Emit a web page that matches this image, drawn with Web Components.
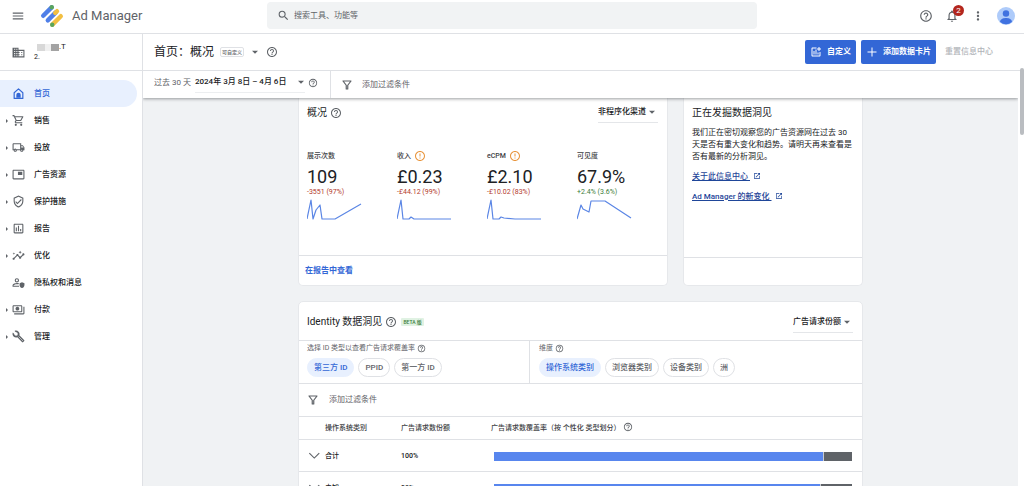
<!DOCTYPE html>
<html lang="zh-CN">
<head>
<meta charset="utf-8">
<title>Ad Manager</title>
<style>
  html, body { margin: 0; height: 100%; }
  body {
    font: 400 8px/12px Roboto, "Noto Sans CJK SC", sans-serif;
    color: #202124;
    background: #fff;
    --line: #dfe1e5;
    --blue: #3367d6;
    --muted: #5f6368;
    overflow: hidden;
  }
</style>
</head>
<body>
<am-app></am-app>
<script>
const ICONS = {
  menu: '<path d="M3 18h18v-2H3v2zm0-5h18v-2H3v2zm0-7v2h18V6H3z"/>',
  search: '<path d="M15.5 14h-.79l-.28-.27A6.47 6.47 0 0 0 16 9.5 6.5 6.5 0 1 0 9.5 16c1.61 0 3.09-.59 4.23-1.57l.27.28v.79l5 4.99L20.49 19l-4.99-5zm-6 0C7.01 14 5 11.99 5 9.5S7.01 5 9.5 5 14 7.01 14 9.5 11.99 14 9.5 14z"/>',
  help: '<path d="M11 18h2v-2h-2v2zm1-16C6.48 2 2 6.48 2 12s4.48 10 10 10 10-4.48 10-10S17.52 2 12 2zm0 18c-4.41 0-8-3.59-8-8s3.59-8 8-8 8 3.59 8 8-3.59 8-8 8zm0-14c-2.21 0-4 1.79-4 4h2c0-1.1.9-2 2-2s2 .9 2 2c0 2-3 1.75-3 5h2c0-2.25 3-2.5 3-5 0-2.21-1.79-4-4-4z"/>',
  bell: '<path d="M12 22c1.1 0 2-.9 2-2h-4c0 1.1.9 2 2 2zm6-6v-5c0-3.07-1.63-5.64-4.5-6.32V4c0-.83-.67-1.5-1.5-1.5s-1.5.67-1.5 1.5v.68C7.64 5.36 6 7.92 6 11v5l-2 2v1h16v-1l-2-2zm-2 1H8v-6c0-2.48 1.51-4.5 4-4.5s4 2.02 4 4.5v6z"/>',
  more: '<path d="M12 8c1.1 0 2-.9 2-2s-.9-2-2-2-2 .9-2 2 .9 2 2 2zm0 2c-1.1 0-2 .9-2 2s.9 2 2 2 2-.9 2-2-.9-2-2-2zm0 6c-1.1 0-2 .9-2 2s.9 2 2 2 2-.9 2-2-.9-2-2-2z"/>',
  business: '<path d="M12 7V3H1v18h22V7H12zM6 19H4v-2h2v2zm0-4H4v-2h2v2zm0-4H4V9h2v2zm0-4H4V5h2v2zm4 12H8v-2h2v2zm0-4H8v-2h2v2zm0-4H8V9h2v2zm0-4H8V5h2v2zm11 12h-9v-2h2v-2h-2v-2h2v-2h-2V9h9v10zm-2-8h-2v2h2v-2zm0 4h-2v2h2v-2z"/>',
  home: '<path d="M4 21V10.5L12 3.5l8 7V21z" fill="none" stroke="currentColor" stroke-width="2.2" stroke-linejoin="round"/><path d="M8 20v-5.500a4 4 0 0 1 8 0V20z"/>',
  cart: '<path d="M15.55 13c.75 0 1.41-.41 1.75-1.03l3.58-6.49A.996.996 0 0 0 20.010 4H5.210l-.94-2H1v2h2l3.600 7.590-1.350 2.440C4.520 15.370 5.480 17 7 17h12v-2H7l1.100-2h7.450zM6.160 6h12.150l-2.760 5H8.530L6.160 6zM7 18c-1.100 0-1.990.9-1.990 2S5.900 22 7 22s2-.9 2-2-.9-2-2-2zm10 0c-1.100 0-1.990.9-1.990 2s.89 2 1.990 2 2-.9 2-2-.9-2-2-2z"/>',
  truck: '<path d="M20 8h-3V4H3c-1.100 0-2 .9-2 2v11h2c0 1.660 1.340 3 3 3s3-1.340 3-3h6c0 1.660 1.340 3 3 3s3-1.340 3-3h2v-5l-3-4zm-.5 1.500 1.960 2.500H17V9.500h2.500zM6 18a1 1 0 1 1 0-2 1 1 0 0 1 0 2zm2.220-3c-.55-.61-1.330-1-2.220-1s-1.670.39-2.220 1H3V6h12v9H8.220zM18 18a1 1 0 1 1 0-2 1 1 0 0 1 0 2z"/>',
  inventory: '<path d="M21 3H3c-1.100 0-2 .9-2 2v14c0 1.100.9 2 2 2h18c1.100 0 2-.9 2-2V5c0-1.100-.9-2-2-2zm0 16H3V5h18v14zM19 7h-8v6h8V7z"/>',
  shield: '<path d="M12 1 3 5v6c0 5.550 3.840 10.740 9 12 5.160-1.260 9-6.450 9-12V5l-9-4zm7 10c0 4.520-2.980 8.690-7 9.930-4.020-1.240-7-5.410-7-9.930V6.300l7-3.110 7 3.110V11zm-11.590.59L6 13l4 4 8-8-1.410-1.420L10 14.170z"/>',
  report: '<path d="M19 3H5c-1.100 0-2 .9-2 2v14c0 1.100.9 2 2 2h14c1.100 0 2-.9 2-2V5c0-1.100-.9-2-2-2zm0 16H5V5h14v14zM7 10h2v7H7zm4-3h2v10h-2zm4 6h2v4h-2z"/>',
  insights: '<path d="M21 8c-1.450 0-2.260 1.440-1.930 2.510l-3.550 3.560c-.3-.09-.74-.09-1.040 0l-2.550-2.550C12.270 10.450 11.460 9 10 9c-1.450 0-2.270 1.440-1.930 2.520l-4.560 4.550C2.440 15.740 1 16.550 1 18c0 1.100.9 2 2 2 1.450 0 2.260-1.440 1.930-2.510l4.550-4.560c.3.090.74.090 1.040 0l2.550 2.550C12.730 16.550 13.540 18 15 18c1.450 0 2.270-1.440 1.930-2.520l3.560-3.550C21.560 12.260 23 11.450 23 10c0-1.100-.9-2-2-2zM15 9l.94-2.070L18 6l-2.060-.93L15 3l-.92 2.070L12 6l2.080.93zM3.500 11 4 9l2-.5L4 8l-.5-2L3 8l-2 .5L3 9z"/>',
  privacy: '<path d="M9 4a4 4 0 1 0 0 8 4 4 0 0 0 0-8zm0 2a2 2 0 1 1 0 4 2 2 0 0 1 0-4zM9 13c-2.700 0-8 1.300-8 4v3h12v-2H3v-1c0-.6 3-2 6-2 1 0 2 .1 3 .4l1-1.800C11.500 13.200 10 13 9 13z"/><path d="m18.500 11.500-4.500 2v3c0 2.800 1.900 5 4.500 5.800 2.600-.8 4.500-3 4.500-5.800v-3z"/>',
  money: '<path d="M19 15V6c0-1.100-.9-2-2-2H3c-1.100 0-2 .9-2 2v9c0 1.100.9 2 2 2h14c1.100 0 2-.9 2-2zm-2 0H3V6h14v9zm-7-8c-1.900 0-3.500 1.600-3.500 3.500S8.100 14 10 14s3.500-1.600 3.500-3.500S11.900 7 10 7zm13 0v12c0 1.100-.9 2-2 2H4v-2h17V7h2z"/>',
  wrench: '<path d="m22.700 19-9.100-9.100c.9-2.300.4-5-1.500-6.900-2-2-5-2.400-7.400-1.300L9 6 6 9 1.600 4.700C.4 7.100.9 10.100 2.900 12.100c1.900 1.900 4.600 2.400 6.900 1.500l9.100 9.100c.4.4 1 .4 1.400 0l2.300-2.300c.5-.4.5-1.100.1-1.400z"/><circle cx="7.500" cy="7.500" r="3.200" fill="#fff"/><path d="M6.500 6.500l3 3M12 12l8.500 8.500" stroke="#fff" stroke-width="1"/>',
  addchart: '<path d="M19 12v7H5V5h8V3H5c-1.100 0-2 .9-2 2v14c0 1.100.9 2 2 2h14c1.100 0 2-.9 2-2v-7zM7 10h2v7H7zm4-3h2v10h-2zm4 6h2v4h-2zM19 5V2h-2v3h-3v2h3v3h2V7h3V5z"/>',
  plus: '<path d="M21 13h-8v8h-2v-8H3v-2h8V3h2v8h8z"/>',
  filter: '<path fill="none" stroke="currentColor" stroke-width="2.400" stroke-linejoin="round" d="M4 4h16l-6.500 8.500V20h-3v-7.500z"/>',
  alert: '<path d="M11 15h2v2h-2v-2zm0-8h2v6h-2V7zm1-5C6.480 2 2 6.480 2 12s4.480 10 10 10 10-4.480 10-10S17.520 2 12 2zm0 18c-4.410 0-8-3.590-8-8s3.590-8 8-8 8 3.590 8 8-3.590 8-8 8z"/>',
  open: '<path d="M19 19H5V5h7V3H5a2 2 0 0 0-2 2v14a2 2 0 0 0 2 2h14c1.100 0 2-.9 2-2v-7h-2v7zM14 3v2h3.590l-9.830 9.830 1.410 1.410L19 6.410V10h2V3h-7z"/>',
  chevron: '<path d="M4 7l8.500 8.500L21 7" fill="none" stroke="currentColor" stroke-width="2"/>',
  caret: '<path d="M3 8l9 9 9-9z"/>',
  avatar: '<circle cx="12" cy="12" r="12" fill="#aecbfa"/><circle cx="12" cy="8.700" r="4.300" fill="#4072e0"/><path d="M4 19.500c1-4 4.500-4.800 8-4.800s7 .8 8 4.800a11 11 0 0 1-16 0z" fill="#4072e0"/>',
  logo: '<g fill="none" stroke-linecap="round" stroke-width="4.400"><path d="M3.200 11.800 11.600 3.400" stroke="#4f7fe8"/><path d="M7.800 16.400 15.800 8.400" stroke="#4f7fe8"/><path d="M15.200 9 17 7.200M12.400 20.600 20.800 12.200" stroke="#f2bf42"/></g><g fill="#5aa55c"><circle cx="11.800" cy="3.200" r="2.200"/><circle cx="12.200" cy="20.800" r="2.200"/></g>'
};

const define = (name, html, setup) => {
  const template = document.createElement('template');
  template.innerHTML = html;
  customElements.define(name, class extends HTMLElement {
    connectedCallback() {
      if (this.shadowRoot) return;
      this.attachShadow({ mode: 'open' }).append(template.content.cloneNode(true));
      if (setup) setup(this, this.shadowRoot);
    }
  });
};

define('am-icon', `
  <style>
    :host { display: inline-flex; flex: none; width: var(--size, 12px); height: var(--size, 12px); color: var(--muted); }
    svg { width: 100%; height: 100%; fill: currentColor; }
  </style>
  <svg viewBox="0 0 24 24" aria-hidden="true"></svg>`,
  (el, root) => { root.querySelector('svg').innerHTML = ICONS[el.getAttribute('name')]; });

define('am-topbar', `
  <style>
    :host { display: grid; grid-template-columns: 267px minmax(0, 490px) 1fr; height: 33px; border-bottom: 1px solid var(--line); flex: none; }
    .brand, .tools { display: flex; align-items: center; height: 31px; }
    .brand { padding-left: 11px; font-size: 13px; line-height: 16px; color: var(--muted); }
    .brand .logo { --size: 24px; margin: 0 8px 0 15px; }
    button { all: unset; display: flex; position: relative; cursor: pointer; }
    .brand button { --size: 14px; }
    label { display: flex; align-items: center; gap: 4px; height: 27px; margin-top: 2px; padding-left: 10px; border-radius: 4px; background: #f1f3f4; --size: 13px; }
    input { all: unset; flex: 1; font-size: 8px; line-height: 12px; }
    input::placeholder { color: var(--muted); opacity: 1; }
    .tools { justify-content: flex-end; gap: 12px; padding-right: 9px; --size: 14px; }
    .avatar { --size: 18px; }
    .count { position: absolute; left: 8px; top: -4px; width: 11px; height: 11px; border-radius: 50%; background: #b3261e; color: #fff; font-size: 8px; line-height: 11px; text-align: center; }
  </style>
  <div class="brand"><button aria-label="菜单"><am-icon name="menu"></am-icon></button><am-icon class="logo" name="logo"></am-icon><span>Ad Manager</span></div>
  <label><am-icon name="search"></am-icon><input type="search" placeholder="搜索工具、功能等" aria-label="搜索"></label>
  <div class="tools">
    <button aria-label="帮助"><am-icon name="help"></am-icon></button>
    <button aria-label="通知"><am-icon name="bell"></am-icon><span class="count">2</span></button>
    <button aria-label="更多"><am-icon name="more"></am-icon></button>
    <button aria-label="账号" class="avatar"><am-icon name="avatar"></am-icon></button>
  </div>`);

define('am-nav-item', `
  <style>
    :host { display: block; }
    a { display: flex; align-items: center; height: 27px; margin-right: 5px; border-radius: 0 14px 14px 0; color: #202124; text-decoration: none; font-weight: 500; --size: 13px; }
    i { width: 0; margin: 0 4px 0 6px; border: 2px solid transparent; border-left-color: var(--muted); border-right: 0; }
    am-icon { margin-right: 9px; }
    :host([leaf]) i { visibility: hidden; }
    :host([active]) a { background: #e8f0fe; color: var(--blue); }
    :host([active]) am-icon { color: var(--blue); }
  </style>
  <a href="#"><i></i><slot></slot></a>`,
  (el, root) => {
    const icon = document.createElement('am-icon');
    icon.setAttribute('name', el.getAttribute('icon'));
    root.querySelector('i').after(icon);
  });

define('am-sidebar', `
  <style>
    :host { display: block; width: 142px; flex: none; border-right: 1px solid var(--line); }
    .account { display: flex; align-items: center; gap: 9px; height: 36px; padding-left: 12px; border-bottom: 1px solid var(--line); }
    .account > am-icon { --size: 13px; }
    .name { display: grid; grid-template-rows: 10px 10px; font-size: 8px; line-height: 10px; }
    .name div { display: flex; align-items: center; }
    .name div:first-child { padding-left: 3px; }
    .name small { font-size: 7px; }
    .block { width: 8px; height: 7px; background: #d8d8d8; }
    .block.light { width: 6px; background: #f0f0f0; }
    .block.dark { background: #a3a3a3; }
    nav { padding-top: 9px; }
  </style>
  <div class="account"><am-icon name="business"></am-icon>
    <div class="name"><div><span class="block"></span><span class="block light"></span><span class="block dark"></span><span>.T</span></div><div><small>2.</small></div></div>
  </div>
  <nav>
    <am-nav-item icon="home" active leaf>首页</am-nav-item>
    <am-nav-item icon="cart">销售</am-nav-item>
    <am-nav-item icon="truck">投放</am-nav-item>
    <am-nav-item icon="inventory">广告资源</am-nav-item>
    <am-nav-item icon="shield">保护措施</am-nav-item>
    <am-nav-item icon="report">报告</am-nav-item>
    <am-nav-item icon="insights">优化</am-nav-item>
    <am-nav-item icon="privacy" leaf>隐私权和消息</am-nav-item>
    <am-nav-item icon="money">付款</am-nav-item>
    <am-nav-item icon="wrench">管理</am-nav-item>
  </nav>`);

define('am-pagehead', `
  <style>
    :host { display: flex; align-items: center; height: 36px; padding: 0 31px 0 11px; border-bottom: 1px solid var(--line); flex: none; }
    h1 { margin: 0 6px 0 0; font-size: 12px; line-height: 18px; font-weight: 400; }
    .tag { padding: 0 1px; border: 1px solid var(--line); border-radius: 2px; font-size: 5px; line-height: 8px; font-weight: 500; color: var(--muted); }
    am-icon[name=caret] { --size: 8px; margin: 0 7px; }
    am-icon[name=help] { --size: 12px; }
    .actions { display: flex; align-items: center; gap: 5px; margin-left: auto; }
    button { all: unset; display: flex; align-items: center; gap: 5px; height: 24px; padding: 0 5px; border-radius: 2px; background: var(--blue); color: #fff; font-weight: 700; cursor: pointer; --size: 12px; }
    button am-icon { color: #fff; }
    button:disabled { background: none; color: #b0b3b8; font-weight: 500; padding: 0 0 0 4px; }
  </style>
  <h1>首页：概况</h1><span class="tag">可自定义</span><am-icon name="caret"></am-icon><am-icon name="help"></am-icon>
  <div class="actions">
    <button><am-icon name="addchart"></am-icon>自定义</button>
    <button><am-icon name="plus"></am-icon>添加数据卡片</button>
    <button disabled>重置信息中心</button>
  </div>`);

define('am-filterbar', `
  <style>
    :host { display: flex; align-items: center; height: 27px; flex: none; position: relative; z-index: 1; background: #fff; box-shadow: 0 1px 3px rgba(60, 64, 67, .5); color: var(--muted); clip-path: inset(0 0 -6px 0); }
    .range { display: flex; align-items: center; box-sizing: border-box; width: 188px; height: 100%; padding: 0 0 4px 11px; border-right: 1px solid var(--line); }
    button { all: unset; display: flex; align-items: center; cursor: pointer; }
    .dates { justify-content: space-between; width: 110px; height: 19px; margin: 0 3px 0 4px; border-bottom: 1px solid #eceef0; font-weight: 500; color: #202124; --size: 8px; }
    .range > am-icon { --size: 10px; }
    .add { gap: 9px; padding-left: 10px; --size: 12px; }
  </style>
  <div class="range"><span>过去 30 天</span><button class="dates">2024年 3月 8日 – 4月 6日<am-icon name="caret"></am-icon></button><am-icon name="help"></am-icon></div>
  <button class="add"><am-icon name="filter"></am-icon>添加过滤条件</button>`);

define('am-select', `
  <style>
    :host { display: flex; align-items: center; position: relative; height: 20px; width: 60px; border-bottom: 1px solid #e4e6e9; }
    select { all: unset; width: 100%; font-size: 8px; line-height: 12px; font-weight: 500; color: #202124; }
    am-icon { position: absolute; right: 2px; top: 6px; --size: 8px; pointer-events: none; }
  </style>
  <select><option></option></select><am-icon name="caret"></am-icon>`,
  (el, root) => {
    root.querySelector('option').textContent = el.getAttribute('value');
    root.querySelector('select').setAttribute('aria-label', el.getAttribute('value'));
  });

define('am-card', `
  <style>
    :host { display: flex; flex-direction: column; box-sizing: border-box; border: 1px solid #e6e8eb; border-radius: 5px; background: #fff; min-width: 0; }
    :host([cut]) { border-top: 0; border-radius: 0 0 5px 5px; }
  </style>
  <slot></slot>`);

define('am-metric', `
  <style>
    :host { display: block; }
    .label { display: flex; align-items: center; gap: 3px; height: 12px; font-size: 7px; font-weight: 500; color: #3c4043; }
    .label am-icon { --size: 12px; color: #e8953d; }
    .value { font-size: 18px; line-height: 20px; margin-top: 5px; }
    .delta { font-size: 7px; line-height: 10px; color: #b3392c; }
    :host([up]) .delta { color: #3c7d3a; }
    svg { display: block; width: 56px; height: 22px; margin-top: 2px; fill: none; stroke: #5b86e5; stroke-width: 1.200; stroke-linejoin: round; }
  </style>
  <div class="label"><span></span></div><div class="value"></div><div class="delta"></div>
  <svg viewBox="0 0 56 22"><polyline/></svg>`,
  (el, root) => {
    root.querySelector('span').textContent = el.getAttribute('label');
    root.querySelector('.value').textContent = el.getAttribute('value');
    root.querySelector('.delta').textContent = el.getAttribute('delta');
    root.querySelector('polyline').setAttribute('points', el.getAttribute('points'));
    if (el.hasAttribute('warn')) {
      const icon = document.createElement('am-icon');
      icon.setAttribute('name', 'alert');
      root.querySelector('.label').append(icon);
    }
  });

define('am-overview', `
  <style>
    :host { display: flex; flex-direction: column; flex: 1; }
    header { display: flex; align-items: center; gap: 3px; height: 29px; padding: 0 9px 0 8px; }
    h2 { margin: 0; font-size: 10px; line-height: 14px; font-weight: 400; }
    am-select { margin-left: auto; }
    .metrics { display: grid; grid-template-columns: repeat(4, 90px); padding: 23px 0 0 8px; flex: 1; }
    footer { height: 30px; display: flex; align-items: center; padding: 1px 0 0 6px; box-sizing: border-box; border-top: 1px solid var(--line); }
    a { color: var(--blue); text-decoration: none; font-weight: 700; }
  </style>
  <header><h2>概况</h2><am-icon name="help"></am-icon><am-select value="非程序化渠道"></am-select></header>
  <div class="metrics">
    <am-metric label="展示次数" value="109" delta="-3551 (97%)" points="0,20 4,1 6,20 9,11 13,6 15,20 28,20 54,5"></am-metric>
    <am-metric label="收入" warn value="£0.23" delta="-£44.12 (99%)" points="0,20 4,1 6,20 12,20 14,18 17,20 54,20"></am-metric>
    <am-metric label="eCPM" warn value="£2.10" delta="-£10.02 (83%)" points="0,20 4,1 6,20 12,20 14,18 17,19 28,20 54,20"></am-metric>
    <am-metric label="可见度" up value="67.9%" delta="+2.4% (3.6%)" points="0,20 4,6 6,10 12,13 14,2 28,2 54,19"></am-metric>
  </div>
  <footer><a href="#">在报告中查看</a></footer>`);

define('am-news', `
  <style>
    :host { display: flex; flex-direction: column; flex: 1; }
    .body { flex: 1; padding: 7px 8px 0; }
    h2 { margin: 0 0 6px; font-size: 10px; line-height: 16px; font-weight: 400; }
    p { margin: 0 0 8px; line-height: 12px; }
    a { color: #1f4699; font-weight: 500; }
    am-icon { --size: 8px; margin-left: 3px; vertical-align: -1px; color: #1f4699; }
    footer { height: 27px; border-top: 1px solid var(--line); }
  </style>
  <div class="body">
    <h2>正在发掘数据洞见</h2>
    <p>我们正在密切观察您的广告资源网在过去 30 天是否有重大变化和趋势。请明天再来查看是否有最新的分析洞见。</p>
    <p><a href="#">关于此信息中心&nbsp;</a><am-icon name="open"></am-icon></p>
    <p><a href="#">Ad Manager 的新变化&nbsp;</a><am-icon name="open"></am-icon></p>
  </div>
  <footer></footer>`);

define('am-chip', `
  <style>
    :host { display: block; }
    button { all: unset; display: block; box-sizing: border-box; height: 19px; padding: 0 6px; border: 1px solid var(--line); border-radius: 10px; line-height: 17px; font-weight: 500; color: var(--muted); cursor: pointer; }
    :host([selected]) button { background: #e8f0fe; border-color: #e8f0fe; color: var(--blue); }
  </style>
  <button><slot></slot></button>`);

define('am-bar', `
  <style>
    :host { display: flex; height: 9px; gap: 1px; background: #c9cdd3; }
    .used { background: #5886ee; }
    .rest { flex: 1; background: #5f6368; }
  </style>
  <div class="used"></div><div class="rest"></div>`,
  (el, root) => { root.querySelector('.used').style.width = el.getAttribute('value') + '%'; });

define('am-identity', `
  <style>
    :host { display: block; }
    header { display: flex; align-items: center; box-sizing: border-box; height: 39px; padding: 2px 9px 0 8px; border-bottom: 1px solid var(--line); }
    h2 { margin: 0 3px 0 0; font-size: 10px; line-height: 14px; font-weight: 400; }
    .beta { margin-left: 4px; padding: 0 2px; border-radius: 1px; background: #e0f2e3; color: #3c7d3a; font-size: 5px; line-height: 8px; font-weight: 500; }
    am-select { margin-left: auto; }
    .groups { display: grid; grid-template-columns: 230px 1fr; border-bottom: 1px solid var(--line); }
    .group { height: 42px; padding-left: 8px; }
    .group + .group { border-left: 1px solid var(--line); padding-left: 9px; }
    .title { display: flex; align-items: center; gap: 2px; height: 14px; font-size: 7px; color: var(--muted); --size: 9px; }
    .chips { display: flex; gap: 4px; padding-top: 3px; }
    .add { all: unset; display: flex; align-items: center; gap: 10px; box-sizing: border-box; width: 100%; height: 33px; padding-left: 8px; border-bottom: 1px solid var(--line); color: var(--muted); --size: 12px; }
    table { width: 100%; border-collapse: collapse; table-layout: fixed; font-size: 7px; font-weight: 500; }
    th, td { padding: 0; height: 31px; text-align: left; font-weight: 500; border-bottom: 1px solid var(--line); }
    thead th { height: 22px; color: #3c4043; }
    thead th:nth-child(2) { width: 90px; }
    thead th:last-child am-icon { --size: 10px; vertical-align: -2px; margin-left: 3px; }
    thead th:first-child { padding-left: 26px; width: 76px; }
    .row { display: flex; align-items: center; gap: 4px; padding-left: 8px; --size: 14px; }
    am-bar { margin: 1px 10px 0 3px; }
  </style>
  <header><h2>Identity 数据洞见</h2><am-icon name="help"></am-icon><span class="beta">BETA 版</span><am-select value="广告请求份额"></am-select></header>
  <div class="groups">
    <div class="group"><div class="title">选择 ID 类型以查看广告请求覆盖率<am-icon name="help"></am-icon></div>
      <div class="chips"><am-chip selected>第三方 ID</am-chip><am-chip>PPID</am-chip><am-chip>第一方 ID</am-chip></div></div>
    <div class="group"><div class="title">维度<am-icon name="help"></am-icon></div>
      <div class="chips"><am-chip selected>操作系统类别</am-chip><am-chip>浏览器类别</am-chip><am-chip>设备类别</am-chip><am-chip>洲</am-chip></div></div>
  </div>
  <button class="add"><am-icon name="filter"></am-icon>添加过滤条件</button>
  <table>
    <thead><tr><th>操作系统类别</th><th>广告请求数份额</th><th>广告请求数覆盖率（按 个性化 类型划分）<am-icon name="help"></am-icon></th></tr></thead>
    <tbody>
      <tr><td><div class="row"><am-icon name="chevron"></am-icon>合计</div></td><td>100%</td><td><am-bar value="92"></am-bar></td></tr>
      <tr><td><div class="row"><am-icon name="chevron"></am-icon>未知</div></td><td>98%</td><td><am-bar value="91"></am-bar></td></tr>
    </tbody>
  </table>`);

define('am-app', `
  <style>
    :host { display: flex; flex-direction: column; height: 100vh; }
    .shell { display: flex; flex: 1; min-height: 0; }
    .page { display: flex; flex-direction: column; flex: 1; min-width: 0; }
    .view { display: flex; flex: 1; min-height: 0; }
    main { display: flex; flex-direction: column; flex: 1; min-width: 0; }
    .canvas { flex: 1; min-height: 0; overflow: hidden; background: #f0f2f4; }
    .track { width: 6px; flex: none; margin-top: -3px; }
    .thumb { width: 4px; height: 67px; margin-left: 2px; border-radius: 2px; background: #babdc1; }
    .grid { display: grid; grid-template-columns: 1fr 180px; gap: 15px; max-width: 565px; margin: 0 auto; }
    .wide { grid-column: 1 / -1; }
  </style>
  <am-topbar></am-topbar>
  <div class="shell">
    <am-sidebar></am-sidebar>
    <div class="page">
      <am-pagehead></am-pagehead>
      <div class="view">
        <main>
          <am-filterbar></am-filterbar>
          <div class="canvas"><div class="grid" style="grid-template-rows: 188px auto">
            <am-card cut><am-overview></am-overview></am-card>
            <am-card cut><am-news></am-news></am-card>
            <am-card class="wide"><am-identity></am-identity></am-card>
          </div></div>
        </main>
        <div class="track"><div class="thumb"></div></div>
      </div>
    </div>
  </div>`);
</script>
</body>
</html>
